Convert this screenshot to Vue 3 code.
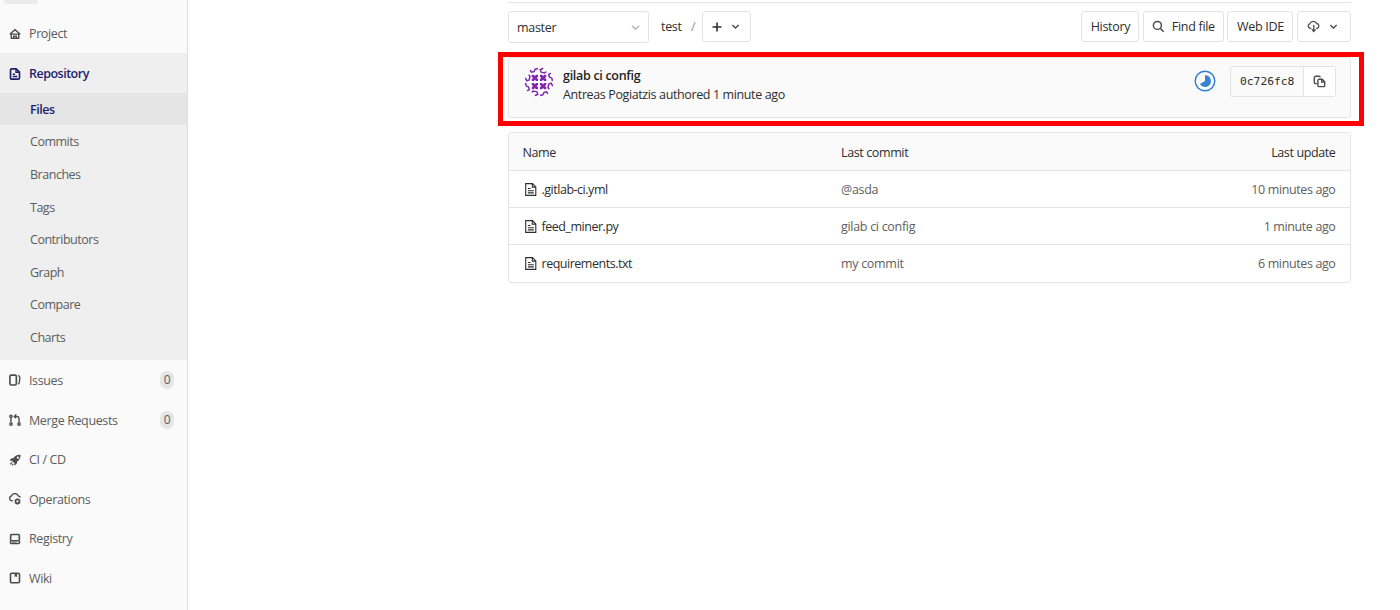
<template>
  <div class="page">
    <aside class="sidebar">
      <div class="sidebar__context"><span class="sidebar__avatar"></span></div>
      <a class="nav-item">
        <svg class="nav-icon" viewBox="0 0 16 16"><path d="M1 8.2 8 2.3l7 5.9M3 8v5.7h10V8M2.2 8.2h11.6M6.2 13.5v-2.6h3.6v2.6" /></svg>
        <span>Project</span>
      </a>
      <div class="nav-group">
        <a class="nav-item nav-item--active">
          <svg class="nav-icon" viewBox="0 0 16 16"><path d="M3.5 1.2h6L14 5.5v7.8a1.6 1.6 0 0 1-1.6 1.6H3.6A1.6 1.6 0 0 1 2 13.3V2.8a1.6 1.6 0 0 1 1.5-1.6Z" stroke-width="2.2" /><path d="M9.3 1.5v4.2h4.5M5 8.3h3M5 11.3h6" /></svg>
          <span>Repository</span>
        </a>
        <a
          v-for="item in repositoryItems"
          :key="item"
          class="nav-sub"
          :class="{ 'nav-sub--active': item === 'Files' }"
        >{{ item }}</a>
      </div>
      <a class="nav-item">
        <svg class="nav-icon" viewBox="0 0 16 16"><rect x="1.2" y="1.4" width="8.6" height="13.2" rx="1.8" stroke-width="2.2" /><path d="M12 2.2c1.8.2 2.5 1 2.5 2.4L13.8 11c-.1 1.2-.7 2-1.8 2.4" /></svg>
        <span>Issues</span>
        <span class="nav-badge">0</span>
      </a>
      <a class="nav-item">
        <svg class="nav-icon" viewBox="0 0 16 16"><circle cx="2.6" cy="3" r="1.6" /><circle cx="2.6" cy="13.4" r="1.6" /><circle cx="13.4" cy="13.4" r="1.6" /><path d="M2.6 4.6v7.2M13.4 11.8V6.3c0-2-1-3.1-3-3.1H7.5M9.7.6 7 3.2l2.7 2.6" /></svg>
        <span>Merge Requests</span>
        <span class="nav-badge">0</span>
      </a>
      <a class="nav-item">
        <svg class="nav-icon nav-icon--fill" viewBox="0 0 16 16"><path fill-rule="evenodd" d="M15.4 1.2C11.5.8 8.2 2.4 6 5.3L2.8 5.9.6 9.1l3.2-.2 3.5 3.5-.2 3.1 3.1-2.2.6-3.1c2.9-2.2 4.8-5.1 4.6-9ZM11.8 3.4a1.5 1.5 0 1 1 0 3 1.5 1.5 0 0 1 0-3Z" /><path d="m3.6 10.5 1.1 1.1L2 14.2l-1-1ZM5.4 12.5l.9 1-2.1 2.2-1-1Z" /></svg>
        <span>CI / CD</span>
      </a>
      <a class="nav-item">
        <svg class="nav-icon" viewBox="0 0 16 16"><path d="M5 10.3H3.9A3.2 3.2 0 0 1 3.2 4 4.8 4.8 0 0 1 12.2 3.800c1.500.2 2.700 1.200 2.900 2.500" /><circle cx="11.300" cy="11.300" r="2.500" stroke-width="2" /><path d="M11.300 7v1.800M11.300 13.800v1.900M7.600 9.100l1.600 1M13.400 12.500l1.700 1M7.600 13.500l1.600-1M13.400 10.100l1.700-1" /></svg>
        <span>Operations</span>
      </a>
      <a class="nav-item">
        <svg class="nav-icon" viewBox="0 0 16 16"><path d="M2.200 10V3.300c0-.8.5-1.300 1.300-1.300h9c.8 0 1.300.5 1.300 1.300V10" stroke-width="2.200" /><rect x="1.800" y="10.300" width="12.400" height="3.700" rx="1.500" /><path d="M4 12.200h6" stroke-width="1" /></svg>
        <span>Registry</span>
      </a>
      <a class="nav-item">
        <svg class="nav-icon" viewBox="0 0 16 16"><rect x="2" y="1.600" width="12" height="12.800" rx="1.700" stroke-width="2.100" /><path d="M7.400 2v5l1.700-1.300L10.800 7V2Z" fill="currentColor" stroke="none" /></svg>
        <span>Wiki</span>
      </a>
    </aside>

    <main class="content">
      <div class="toolbar">
        <button class="ref-select">
          <span>master</span>
          <svg class="chevron chevron--light" viewBox="0 0 10 10"><path d="m1 3 4 4 4-4" /></svg>
        </button>
        <span class="crumb">test</span>
        <span class="crumb-sep">/</span>
        <button class="btn btn--add">
          <svg class="plus" viewBox="0 0 10 10"><path d="M5 .5v9M.5 5h9" /></svg>
          <svg class="chevron" viewBox="0 0 10 10"><path d="m1.500 3.400 3.500 3.400 3.500-3.400" /></svg>
        </button>
        <div class="toolbar__actions">
          <button class="btn btn--history">History</button>
          <button class="btn btn--find">
            <svg class="search" viewBox="0 0 14 14"><circle cx="5.800" cy="5.800" r="4.300" /><path d="m9 9 3.600 3.600" /></svg>
            <span>Find file</span>
          </button>
          <button class="btn btn--ide">Web IDE</button>
          <button class="btn btn--download">
            <svg class="cloud" viewBox="0 0 16 16"><path d="M5.300 10.200H4.200A3 3 0 0 1 3.500 4.400 4.700 4.700 0 0 1 12 4.300a3 3 0 0 1 .3 5.900h-1.100M8.300 6.200v7.600M5.900 11.500l2.400 2.600 2.400-2.600" /></svg>
            <svg class="chevron" viewBox="0 0 10 10"><path d="m1.500 3.400 3.500 3.400 3.500-3.400" /></svg>
          </button>
        </div>
      </div>

      <section class="commit">
        <svg class="identicon" viewBox="0 0 30 30">
          <circle cx="15" cy="15" r="15" fill="#fff" stroke="none" />
          <g v-for="angle in [0, 90, 180, 270]" :key="angle" :transform="`rotate(${angle} 15 15)`">
            <path class="identicon__solid" d="M7.700 7.700h2.100l1.100 1.400L12 7.700h2.100v2.100L12.700 10.900 14.100 12v2.100H12l-1.100-1.400-1.100 1.400H7.700V12l1.400-1.100-1.400-1.100Z" />
            <path class="identicon__line" d="M5.800 2.600 7.400 5.200 10 4.600 11.200 2.200 14 1.500M19.200 1.300l-3 1.400.9 2.500 3.500.8 1.700-1.300" />
          </g>
        </svg>
        <div class="commit__text">
          <div class="commit__title">gilab ci config</div>
          <div class="commit__meta">Antreas Pogiatzis authored 1 minute ago</div>
        </div>
        <svg class="status" viewBox="0 0 22 22"><circle cx="11" cy="11" r="9.800" /><path d="M11 5.200A5.900 5.900 0 1 1 5.900 14L11 11Z" /></svg>
        <div class="sha">
          <span class="sha__text">0c726fc8</span>
          <span class="sha__copy">
            <svg viewBox="0 0 14 14"><path d="M4.300 9.300H3A1.600 1.600 0 0 1 1.400 7.700V3A1.600 1.600 0 0 1 3 1.400h3.500A1.600 1.600 0 0 1 8 2.500" /><path d="M6.600 4.600h3.300l2.700 2.700v3.900a1.300 1.300 0 0 1-1.300 1.300H6.600a1.300 1.300 0 0 1-1.300-1.300V5.900a1.300 1.300 0 0 1 1.300-1.300ZM9.400 5v2.700h3" /></svg>
          </span>
        </div>
        <div class="commit__highlight"></div>
      </section>

      <section class="tree">
        <div class="tree__row tree__row--head">
          <span>Name</span>
          <span>Last commit</span>
          <span class="tree__time">Last update</span>
        </div>
        <div v-for="file in files" :key="file.name" class="tree__row">
          <span class="tree__name">
            <svg viewBox="0 0 12 13"><path d="M.700.600h6.800l3.300 3.300v8.500H.700ZM7.300.800v3.300h3.300M2.900 5.500h2.600M2.900 7.700h5.900M2.900 9.900h5.900" /></svg>
            {{ file.name }}
          </span>
          <span class="tree__commit">{{ file.commit }}</span>
          <span class="tree__time">{{ file.updated }}</span>
        </div>
      </section>
    </main>
  </div>
</template>

<script setup>
const repositoryItems = ['Files', 'Commits', 'Branches', 'Tags', 'Contributors', 'Graph', 'Compare', 'Charts']

const files = [
  { name: '.gitlab-ci.yml', commit: '@asda', updated: '10 minutes ago' },
  { name: 'feed_miner.py', commit: 'gilab ci config', updated: '1 minute ago' },
  { name: 'requirements.txt', commit: 'my commit', updated: '6 minutes ago' }
]
</script>

<style>
body {
  background: #fff;
  overflow: hidden;
}
</style>

<style scoped>
.page {
  display: flex;
  height: 610px;
  font-family: "Open Sans", "Noto Sans", sans-serif;
  font-size: 12.5px;
  letter-spacing: -0.38px;
  color: #2e2e2e;
  white-space: nowrap;
}

svg {
  display: block;
  flex: none;
  fill: none;
  stroke: currentColor;
  stroke-width: 1.6;
}

/* sidebar */
.sidebar {
  box-sizing: border-box;
  flex: none;
  width: 188px;
  height: 610px;
  background: #fafafa;
  border-right: 1px solid #dfdfdf;
  overflow: hidden;
  color: #5c5c5c;
}
.sidebar__context {
  height: 13.5px;
}
.sidebar__avatar {
  display: block;
  width: 34px;
  height: 4px;
  margin-left: 4px;
  border-radius: 0 0 3px 3px;
  background: #ebebeb;
}
.nav-item {
  display: flex;
  align-items: center;
  box-sizing: border-box;
  height: 39.6px;
  padding: 1.4px 13px 0 9px;
}
.nav-icon {
  width: 12px;
  height: 12px;
  margin-right: 8px;
  color: #4c4c4c;
  stroke-width: 1.8;
}
.nav-icon--fill {
  fill: currentColor;
  stroke: none;
}
.nav-item--active {
  font-weight: 600;
  letter-spacing: -0.5px;
  color: #1f1f6d;
}
.nav-item--active .nav-icon {
  color: #1f1f6d;
}
.nav-group {
  box-sizing: border-box;
  height: 306.9px;
  background: #efefef;
}
.nav-sub {
  display: block;
  box-sizing: border-box;
  height: 32.55px;
  line-height: 32.55px;
  padding-top: 1.2px;
  padding-left: 30px;
  letter-spacing: -0.48px;
}
.nav-sub--active {
  background: #e5e5e5;
  color: #1f1f6d;
  font-weight: 600;
}
.nav-badge {
  width: 14px;
  height: 18px;
  line-height: 18px;
  margin-left: auto;
  border-radius: 9px;
  background: #e5e5e5;
  text-align: center;
  font-size: 12px;
}

/* toolbar */
.content {
  box-sizing: border-box;
  width: 843px;
  margin-left: 320px;
  padding-top: 2px;
}
.toolbar {
  display: flex;
  box-sizing: border-box;
  height: 55px;
  padding-top: 8px;
  border-top: 1px solid #e5e5e5;
}
button {
  display: flex;
  align-items: center;
  box-sizing: border-box;
  height: 31px;
  margin: 0;
  padding: 0;
  border: 1px solid #e3e3e3;
  border-radius: 3px;
  background: #fff;
  font: inherit;
  letter-spacing: -0.3px;
  color: inherit;
}
.ref-select {
  justify-content: space-between;
  width: 141px;
  height: 32px;
  padding: 0 8px 0 8px;
}
.chevron {
  width: 9px;
  height: 9px;
  color: #4c4c4c;
}
.chevron--light {
  color: #b5b5b5;
}
.crumb,
.crumb-sep {
  line-height: 31px;
}
.crumb {
  width: 21px;
  margin-left: 12px;
  letter-spacing: -0.3px;
}
.crumb-sep {
  width: 11px;
  margin-left: 9px;
  color: #8f8f8f;
}
.btn--add {
  width: 49px;
  padding-left: 9px;
  gap: 9px;
}
.plus {
  width: 10px;
  height: 10px;
}
.toolbar__actions {
  display: flex;
  gap: 3.6px;
  margin-left: auto;
}
.btn {
  justify-content: center;
}
.btn--add,
.btn--find,
.btn--download {
  justify-content: flex-start;
}
.btn--history {
  width: 58.5px;
  padding-left: 1px;
}
.btn--find {
  width: 81px;
  padding-left: 8px;
  gap: 7px;
}
.btn--ide {
  width: 66px;
}
.btn--download {
  width: 54px;
  padding-left: 9px;
  gap: 9px;
}
.search {
  width: 13px;
  height: 13px;
  color: #4c4c4c;
}
.cloud {
  width: 13px;
  height: 13px;
  color: #4c4c4c;
}

/* last commit */
.commit {
  position: relative;
  display: flex;
  box-sizing: border-box;
  height: 61px;
  padding: 9px 14px 0 15px;
  border: 1px solid #e5e5e5;
  border-radius: 3px;
  background: #fafafa;
}
.commit__highlight {
  position: absolute;
  inset: -6px -14px -9px -11px;
  border: 5px solid #f00;
}
.identicon {
  width: 30px;
  height: 30px;
  border-radius: 50%;
  overflow: hidden;
}
.identicon__solid {
  fill: #8127b0;
  stroke: none;
}
.identicon__line {
  stroke: #8127b0;
  stroke-width: 1.5;
}
.commit__text {
  margin-left: 9px;
  line-height: 18.5px;
}
.commit__title {
  font-weight: 600;
  letter-spacing: -0.3px;
  color: #1f1f1f;
}
.status {
  width: 22px;
  height: 22px;
  margin: 3px 14px 0 auto;
  stroke: #2e7fd2;
  stroke-width: 1.4;
}
.status path {
  fill: #3783d3;
  stroke: none;
}
.sha {
  display: flex;
  box-sizing: border-box;
  width: 106px;
  height: 31px;
  margin-top: -1px;
  border: 1px solid #e3e3e3;
  border-radius: 3px;
}
.sha__text {
  box-sizing: border-box;
  width: 73px;
  line-height: 29px;
  padding-left: 9px;
  border-right: 1px solid #e3e3e3;
  font-family: "DejaVu Sans Mono", monospace;
  font-size: 11.3px;
  letter-spacing: 0;
}
.sha__copy {
  display: flex;
  flex: 1;
  align-items: center;
  justify-content: center;
  background: #fff;
  color: #4c4c4c;
}
.sha__copy svg {
  width: 13px;
  height: 13px;
  stroke-width: 1.5;
}

/* file list */
.tree {
  box-sizing: border-box;
  height: 151px;
  margin-top: 14px;
  border: 1px solid #e5e5e5;
  border-radius: 3px;
  overflow: hidden;
}
.tree__row {
  display: grid;
  grid-template-columns: 318.5px 1fr 150px;
  align-items: center;
  box-sizing: border-box;
  height: 37px;
  padding: 0 14.5px 0 13.5px;
  border-top: 1px solid #e5e5e5;
}
.tree__row--head {
  padding-top: 2px;
  border-top: 0;
  background: #fafafa;
}
.tree__name {
  display: flex;
  align-items: center;
  gap: 5px;
  padding-left: 2px;
  letter-spacing: -0.48px;
}
.tree__name svg {
  width: 12px;
  height: 13px;
  stroke-width: 1.1;
}
.tree__commit,
.tree__time {
  color: #606060;
}
.tree__commit {
  letter-spacing: -0.3px;
}
.tree__time {
  text-align: right;
}
.tree__row--head .tree__time {
  color: inherit;
}
</style>
